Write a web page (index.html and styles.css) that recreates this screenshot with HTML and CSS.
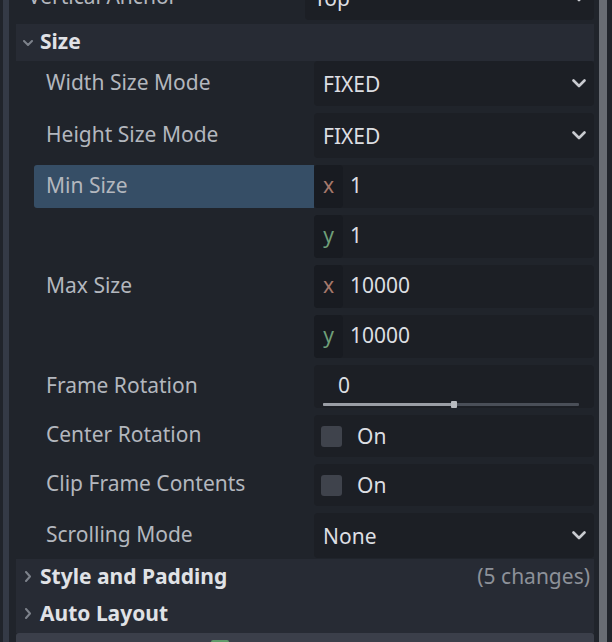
FILE: index.html
```html
<!DOCTYPE html>
<html>
<head>
<meta charset="utf-8">
<link rel="stylesheet" href="styles.css">
</head>
<body>
<div class="page">
  <div class="gutter"></div>
  <div class="stripe"></div>
  <div class="content">
    <div class="prop outer first">
      <div class="label">Vertical Anchor</div>
      <div class="value dropdown tall"><span>Top</span><svg class="chev" viewBox="0 0 14 9"><polyline points="1.5,1.5 7,7 12.5,1.5"/></svg></div>
    </div>

    <div class="section-header">
      <svg class="hchev down" viewBox="0 0 10 6"><polyline points="1,1 5,5 9,1"/></svg>
      <span class="title">Size</span>
    </div>

    <div class="section-body">
      <div class="prop">
        <div class="label">Width Size Mode</div>
        <div class="value dropdown tall"><span>FIXED</span><svg class="chev" viewBox="0 0 14 9"><polyline points="1.5,1.5 7,7 12.5,1.5"/></svg></div>
      </div>
      <div class="prop">
        <div class="label">Height Size Mode</div>
        <div class="value dropdown tall"><span>FIXED</span><svg class="chev" viewBox="0 0 14 9"><polyline points="1.5,1.5 7,7 12.5,1.5"/></svg></div>
      </div>
      <div class="prop vector">
        <div class="label selected">Min Size</div>
        <div class="comps">
          <div class="value comp"><span class="axis ax">x</span><span class="num">1</span></div>
          <div class="value comp"><span class="axis ay">y</span><span class="num">1</span></div>
        </div>
      </div>
      <div class="prop vector">
        <div class="label">Max Size</div>
        <div class="comps">
          <div class="value comp"><span class="axis ax">x</span><span class="num">10000</span></div>
          <div class="value comp"><span class="axis ay">y</span><span class="num">10000</span></div>
        </div>
      </div>
      <div class="prop">
        <div class="label">Frame Rotation</div>
        <div class="value slider">
          <span class="snum">0</span>
          <div class="track"><div class="fill" style="width:51%"></div><div class="knob"></div></div>
        </div>
      </div>
      <div class="prop">
        <div class="label">Center Rotation</div>
        <div class="value check"><span class="box"></span><span>On</span></div>
      </div>
      <div class="prop">
        <div class="label">Clip Frame Contents</div>
        <div class="value check"><span class="box"></span><span>On</span></div>
      </div>
      <div class="prop">
        <div class="label">Scrolling Mode</div>
        <div class="value dropdown tall"><span>None</span><svg class="chev" viewBox="0 0 14 9"><polyline points="1.5,1.5 7,7 12.5,1.5"/></svg></div>
      </div>
    </div>

    <div class="section-header">
      <svg class="hchev right" viewBox="0 0 6 11"><polyline points="1,1 5,5.5 1,10"/></svg>
      <span class="title">Style and Padding</span>
      <span class="changes">(5 changes)</span>
    </div>
    <div class="section-header">
      <svg class="hchev right" viewBox="0 0 6 11"><polyline points="1,1 5,5.5 1,10"/></svg>
      <span class="title">Auto Layout</span>
    </div>
    <div class="next-bar"><span class="next-icon"></span></div>
  </div>
  <div class="scroll-gap"></div>
  <div class="scrollbar"></div>
  <div class="scroll-right"></div>
</div>
</body>
</html>
```

FILE: styles.css
```css
html, body {
  margin: 0;
  padding: 0;
  background: #20242b;
}
body {
  font-family: "Noto Sans", "Open Sans", sans-serif;
  font-size: 21px;
  color: #dcdee2;
}
.page {
  display: flex;
  width: 612px;
  height: 642px;
  overflow: hidden;
  background: #20242b;
}
.gutter { width: 3px; flex: none; }
.stripe { width: 6px; flex: none; background: #343a46; }
.content {
  flex: 1;
  min-width: 0;
  padding-left: 7px;
  display: flex;
  flex-direction: column;
}
.content > * { flex: none; }
.scroll-gap { width: 5px; flex: none; }
.scrollbar { width: 8px; flex: none; background: #686c73; }
.scroll-right { width: 5px; flex: none; }

.prop {
  display: grid;
  grid-template-columns: 1fr 1fr;
  flex: none;
}
.prop.first {
  margin-top: -25px;
  margin-bottom: 4px;
}
.label {
  display: flex;
  align-items: center;
  padding-left: 12px;
  padding-bottom: 4px;
  box-sizing: border-box;
  color: #b3b7be;
  white-space: nowrap;
  border-radius: 3px 0 0 3px;
}
.label.selected { background: #364e66; }
.value {
  background: #1c1f25;
  border-radius: 4px;
  display: flex;
  align-items: center;
  height: 43px;
  box-sizing: border-box;
}
.value.tall { height: 45px; }
.dropdown {
  padding: 0 8px 0 9px;
  justify-content: space-between;
}
.chev {
  width: 14px;
  height: 9px;
  fill: none;
  stroke: #c9cbd0;
  stroke-width: 2.6;
  stroke-linecap: round;
  stroke-linejoin: round;
}

.section-header {
  height: 37px;
  box-sizing: border-box;
  padding: 0 4px 4px 7px;
  background: #272b34;
  display: flex;
  align-items: center;
}
.section-header .title {
  font-weight: bold;
  color: #e0e2e6;
  margin-left: 7px;
}
.hchev {
  fill: none;
  stroke: #7d828b;
  stroke-width: 2;
  stroke-linecap: round;
  stroke-linejoin: round;
}
.hchev.down { width: 10px; height: 6px; margin-top: 4px; }
.hchev.right { width: 6px; height: 11px; margin-left: 2px; margin-right: 2px; margin-top: 2px; }
.changes {
  margin-left: auto;
  color: #8d9199;
}

.section-body {
  display: flex;
  flex-direction: column;
  gap: 7px;
  padding-left: 18px;
  padding-bottom: 1px;
}
.vector .label { height: 43px; align-self: start; }
.comps {
  display: flex;
  flex-direction: column;
  gap: 7px;
}
.comp { padding: 0; }
.axis {
  width: 29px;
  height: 43px;
  box-sizing: border-box;
  padding-bottom: 4px;
  background: #181b21;
  border-radius: 4px;
  display: flex;
  align-items: center;
  justify-content: center;
  flex: none;
}
.ax { color: #a5786b; }
.ay { color: #6f9f79; }
.num { margin-left: 7px; padding-bottom: 4px; color: #dcdee2; }

.slider {
  flex-direction: column;
  align-items: stretch;
  padding: 6px 15px 0 9px;
  justify-content: flex-start;
}
.snum {
  display: block;
  padding-left: 15px;
  line-height: 28px;
  height: 28px;
}
.track {
  position: relative;
  height: 3px;
  margin-top: 4px;
  background: #4a4f58;
  border-radius: 1px;
}
.fill {
  height: 3px;
  background: #9a9ea5;
  border-radius: 1px;
}
.knob {
  position: absolute;
  left: 51%;
  top: -2px;
  width: 6px;
  height: 7px;
  margin-left: -3px;
  background: #b8bbc0;
  border-radius: 1px;
}

.check {
  height: 42px;
  padding-left: 7px;
}
.check .box {
  width: 21px;
  height: 21px;
  border-radius: 3px;
  background: #3f434c;
  margin-right: 15px;
}

.next-bar {
  height: 20px;
  background: #3b3f4a;
  border-radius: 3px 3px 0 0;
  padding-top: 7px;
  padding-left: 195px;
}
.next-icon {
  display: block;
  width: 18px;
  height: 10px;
  background: #5f9a6a;
  border-radius: 2px;
}
```
